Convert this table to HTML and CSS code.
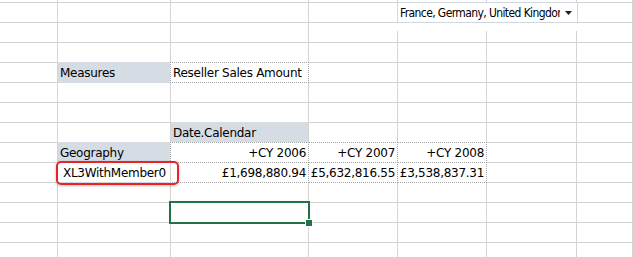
FILE: index.html
```html
<!DOCTYPE html>
<html>
<head>
<meta charset="utf-8">
<link rel="stylesheet" href="styles.css">
</head>
<body>
<div class="sheet">
  <div class="row first">
    <div class="cell c0"></div><div class="cell c1"></div><div class="cell c2"></div><div class="cell c3"></div><div class="cell c4"></div><div class="cell c5"></div><div class="cell c6"></div>
  </div>
  <div class="row">
    <div class="cell c0"></div><div class="cell c1"></div><div class="cell c2"></div><div class="cell c3"></div><div class="cell c4"></div><div class="cell c5"></div><div class="cell c6"></div>
  </div>
  <div class="row">
    <div class="cell c0"></div><div class="cell c1"></div><div class="cell c2"></div><div class="cell c3"></div><div class="cell c4"></div><div class="cell c5"></div><div class="cell c6"></div>
  </div>
  <div class="row">
    <div class="cell c0"></div><div class="cell c1"></div><div class="cell c2"></div><div class="cell c3"></div><div class="cell c4"></div><div class="cell c5"></div><div class="cell c6"></div>
  </div>
  <div class="row">
    <div class="cell c0"></div><div class="cell c1 shade">Measures</div><div class="cell c2 dotted">Reseller Sales Amount</div><div class="cell c3"></div><div class="cell c4"></div><div class="cell c5"></div><div class="cell c6"></div>
  </div>
  <div class="row">
    <div class="cell c0"></div><div class="cell c1"></div><div class="cell c2"></div><div class="cell c3"></div><div class="cell c4"></div><div class="cell c5"></div><div class="cell c6"></div>
  </div>
  <div class="row">
    <div class="cell c0"></div><div class="cell c1"></div><div class="cell c2"></div><div class="cell c3"></div><div class="cell c4"></div><div class="cell c5"></div><div class="cell c6"></div>
  </div>
  <div class="row">
    <div class="cell c0"></div><div class="cell c1"></div><div class="cell c2 shade">Date.Calendar</div><div class="cell c3"></div><div class="cell c4"></div><div class="cell c5"></div><div class="cell c6"></div>
  </div>
  <div class="row">
    <div class="cell c0"></div><div class="cell c1 shade">Geography</div><div class="cell c2 dotted num">+CY 2006</div><div class="cell c3 dotted num">+CY 2007</div><div class="cell c4 dotted num">+CY 2008</div><div class="cell c5"></div><div class="cell c6"></div>
  </div>
  <div class="row">
    <div class="cell c0"></div><div class="cell c1 member"><span class="highlight"></span>XL3WithMember0</div><div class="cell c2 dotted num">£1,698,880.94</div><div class="cell c3 dotted num">£5,632,816.55</div><div class="cell c4 dotted num">£3,538,837.31</div><div class="cell c5"></div><div class="cell c6"></div>
  </div>
  <div class="row">
    <div class="cell c0"></div><div class="cell c1"></div><div class="cell c2"></div><div class="cell c3"></div><div class="cell c4"></div><div class="cell c5"></div><div class="cell c6"></div>
  </div>
  <div class="row">
    <div class="cell c0"></div><div class="cell c1"></div><div class="cell c2 selected"><span class="sel-frame"><span class="sel-handle"></span></span></div><div class="cell c3"></div><div class="cell c4"></div><div class="cell c5"></div><div class="cell c6"></div>
  </div>
  <div class="row">
    <div class="cell c0"></div><div class="cell c1"></div><div class="cell c2"></div><div class="cell c3"></div><div class="cell c4"></div><div class="cell c5"></div><div class="cell c6"></div>
  </div>
  <div class="row">
    <div class="cell c0"></div><div class="cell c1"></div><div class="cell c2"></div><div class="cell c3"></div><div class="cell c4"></div><div class="cell c5"></div><div class="cell c6"></div>
  </div>

  <div class="filter">
    <div class="filter-box">
      <span class="filter-text">France, Germany, United Kingdom</span>
      <svg class="filter-arrow" width="7" height="4" viewBox="0 0 7 4"><polygon points="0,0 7,0 3.5,4" fill="#1e1e1e"/></svg>
    </div>
  </div>
</div>
</body>
</html>
```

FILE: styles.css
```css
html, body {
  margin: 0;
  padding: 0;
  background: #ffffff;
  overflow: hidden;
}

.sheet {
  position: relative;
  width: 633px;
  height: 257px;
  overflow: hidden;
  font-family: "DejaVu Sans", sans-serif;
  font-size: 12px;
  letter-spacing: -0.28px;
  color: #000;
}

.row {
  display: flex;
  height: 20px;
}

.row.first {
  margin-top: -17px;
}

.cell {
  box-sizing: border-box;
  height: 20px;
  border-right: 1px solid #d4d4d4;
  border-bottom: 1px solid #d4d4d4;
  display: flex;
  align-items: flex-end;
  padding: 0 2px 1px 2px;
  line-height: 15px;
  white-space: nowrap;
  flex: none;
}

.c0 { width: 58px; }
.c1 { width: 113px; }
.c2 { width: 138px; }
.c3 { width: 89px; }
.c4 { width: 89px; }
.c5 { width: 90px; }
.c6 { flex: 1 1 auto; }

.shade {
  background: #d6dce4;
  border-bottom-color: #d6dce4;
  box-shadow: 0 -1px 0 #d6dce4;
}

.num {
  justify-content: flex-end;
}

.dotted {
  position: relative;
  z-index: 0;
}

.dotted::before {
  content: "";
  position: absolute;
  top: -1px;
  left: -1px;
  right: -1px;
  bottom: -1px;
  border: 1px dotted #a6a6a6;
  background: #ffffff;
  z-index: -1;
}

.member {
  position: relative;
  z-index: 2;
  padding-left: 5px;
}

.highlight {
  position: absolute;
  left: -2px;
  top: -2px;
  width: 123px;
  height: 24px;
  box-sizing: border-box;
  border: 2px solid #e8232a;
  border-radius: 5px;
  box-shadow: 0 1px 3px rgba(0, 0, 0, 0.25);
}

.selected {
  position: relative;
}

.sel-frame {
  position: absolute;
  left: -2px;
  top: -2px;
  right: -2px;
  bottom: -2px;
  border: 2px solid #217346;
}

.sel-handle {
  position: absolute;
  right: -4px;
  bottom: -4px;
  width: 6px;
  height: 6px;
  background: #217346;
  box-shadow: 0 0 0 1px #ffffff;
}

.filter {
  position: absolute;
  z-index: 3;
  left: 397px;
  top: 2px;
  width: 181px;
  height: 29px;
  background: #ffffff;
}

.filter-box {
  box-sizing: border-box;
  height: 21px;
  border: 1px solid #cfd7e1;
  display: flex;
  align-items: center;
  padding: 1px 5px 0 2px;
  background: #ffffff;
}

.filter-text {
  width: 160px;
  overflow: hidden;
  white-space: nowrap;
  line-height: 15px;
  flex: none;
  font-family: "DejaVu Sans Condensed", "DejaVu Sans", sans-serif;
  letter-spacing: -0.6px;
}

.filter-arrow {
  margin-left: auto;
  display: block;
}
```
